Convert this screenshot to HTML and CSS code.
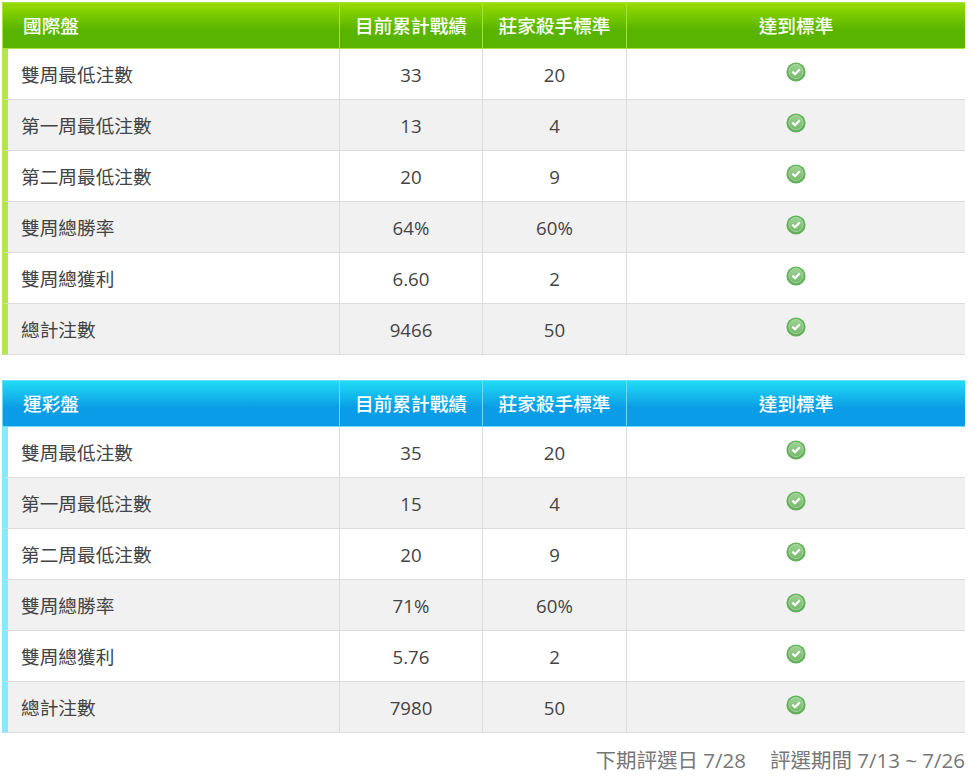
FILE: index.html
```html
<!DOCTYPE html>
<html lang="zh-Hant">
<head>
<meta charset="utf-8">
<title>莊家殺手標準</title>
<link rel="stylesheet" href="styles.css">
</head>
<body>
<svg class="defs" width="0" height="0" aria-hidden="true">
  <defs>
    <linearGradient id="ball" x1="0" y1="0" x2="0" y2="1">
      <stop offset="0" stop-color="#9fd296"/>
      <stop offset="1" stop-color="#74b96a"/>
    </linearGradient>
    <linearGradient id="rim" x1="0" y1="0" x2="0" y2="1">
      <stop offset="0" stop-color="#5fb455"/>
      <stop offset="1" stop-color="#66ad5e"/>
    </linearGradient>
    <symbol id="ok" viewBox="0 0 20 20">
      <circle cx="10" cy="10" r="9.6" fill="url(#rim)"/>
      <circle cx="10" cy="9.5" r="7.2" fill="url(#ball)" stroke="#b9dcb2" stroke-width="0.7"/>
      <path d="M6.4 9.6 L9 12.2 L13.8 7.2" fill="none" stroke="#fff" stroke-width="2.2"/>
    </symbol>
  </defs>
</svg>
<main class="page">
  <table class="board green">
    <thead><tr><th class="name">國際盤</th><th>目前累計戰績</th><th>莊家殺手標準</th><th>達到標準</th></tr></thead>
    <tbody>
      <tr><td class="name">雙周最低注數</td><td>33</td><td>20</td><td class="mark"><svg class="ok"><use href="#ok"/></svg></td></tr>
      <tr><td class="name">第一周最低注數</td><td>13</td><td>4</td><td class="mark"><svg class="ok"><use href="#ok"/></svg></td></tr>
      <tr><td class="name">第二周最低注數</td><td>20</td><td>9</td><td class="mark"><svg class="ok"><use href="#ok"/></svg></td></tr>
      <tr><td class="name">雙周總勝率</td><td>64%</td><td>60%</td><td class="mark"><svg class="ok"><use href="#ok"/></svg></td></tr>
      <tr><td class="name">雙周總獲利</td><td>6.60</td><td>2</td><td class="mark"><svg class="ok"><use href="#ok"/></svg></td></tr>
      <tr><td class="name">總計注數</td><td>9466</td><td>50</td><td class="mark"><svg class="ok"><use href="#ok"/></svg></td></tr>
    </tbody>
  </table>
  <table class="board blue">
    <thead><tr><th class="name">運彩盤</th><th>目前累計戰績</th><th>莊家殺手標準</th><th>達到標準</th></tr></thead>
    <tbody>
      <tr><td class="name">雙周最低注數</td><td>35</td><td>20</td><td class="mark"><svg class="ok"><use href="#ok"/></svg></td></tr>
      <tr><td class="name">第一周最低注數</td><td>15</td><td>4</td><td class="mark"><svg class="ok"><use href="#ok"/></svg></td></tr>
      <tr><td class="name">第二周最低注數</td><td>20</td><td>9</td><td class="mark"><svg class="ok"><use href="#ok"/></svg></td></tr>
      <tr><td class="name">雙周總勝率</td><td>71%</td><td>60%</td><td class="mark"><svg class="ok"><use href="#ok"/></svg></td></tr>
      <tr><td class="name">雙周總獲利</td><td>5.76</td><td>2</td><td class="mark"><svg class="ok"><use href="#ok"/></svg></td></tr>
      <tr><td class="name">總計注數</td><td>7980</td><td>50</td><td class="mark"><svg class="ok"><use href="#ok"/></svg></td></tr>
    </tbody>
  </table>
  <p class="note"><span>下期評選日 7/28</span><span>評選期間 7/13 ~ 7/26</span></p>
</main>
</body>
</html>
```
FILE: styles.css
```css
html, body { margin: 0; padding: 0; background: #fff; }
body {
  font-family: "Open Sans", "Noto Sans CJK TC", sans-serif;
  color: #444;
  overflow: hidden;
}
.defs { position: absolute; }
.page { width: 963px; padding: 2px 6px 0 2px; }
.board {
  width: 963px;
  table-layout: fixed;
  border-collapse: separate;
  border-spacing: 0;
  margin-bottom: 25px;
}
.board th {
  box-sizing: border-box;
  height: 47px;
  padding: 0 0 2px;
  font-size: 18.67px;
  font-weight: 500;
  color: #fff;
  text-align: center;
  border-top: 1px solid;
  border-bottom: 1px solid;
  border-left: 1px solid;
}
.board th:last-child { border-right: 0; }
.board td {
  box-sizing: border-box;
  height: 51px;
  padding: 0;
  font-size: 18.67px;
  text-align: center;
  border-bottom: 1px solid #dcdcdc;
  border-left: 1px solid #dcdcdc;
}
.board th:nth-child(1), .board td:nth-child(1) { width: 337px; }
.board th:nth-child(2), .board td:nth-child(2) { width: 143px; }
.board th:nth-child(3), .board td:nth-child(3) { width: 144px; }
.board th.name { text-align: left; padding-left: 20px; }
.board td.name {
  text-align: left;
  padding: 0 0 2px 13px;
  border-left-width: 6px;
  border-left-style: solid;
}
.board tbody tr:nth-child(even) td { background: #f1f1f1; }
.green th { background: linear-gradient(#96dc00, #58b400 60%); border-color: #a8e23c; }
.green td.name { border-left-color: #b4e650; }
.blue th { background: linear-gradient(#22dcf4, #0a9ce6 60%); border-color: #6cdcf4; }
.blue td.name { border-left-color: #8ce6fc; }
.mark { vertical-align: top; }
.board td.mark { padding: 13px 0 0; }
.ok { display: block; width: 20px; height: 20px; margin: 0 auto; }
.note {
  margin: -11px 0 0;
  font-size: 20.5px;
  line-height: 26px;
  color: #777;
  text-align: right;
  white-space: nowrap;
}
.note span + span { margin-left: 24px; }
```
